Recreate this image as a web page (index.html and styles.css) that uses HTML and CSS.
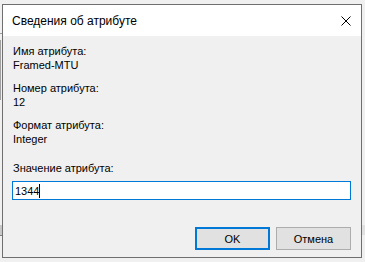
FILE: index.html
```html
<!DOCTYPE html>
<html lang="ru">
<head>
<meta charset="utf-8">
<title>Сведения об атрибуте</title>
<link rel="stylesheet" href="styles.css">
</head>
<body>
<div class="desk">
  <div class="bg-line bg-top"></div>
  <div class="bg-line bg-left"></div>
  <div class="bg-box bg-bl"></div>
  <div class="bg-box bg-br"></div>
  <div class="window">
    <div class="titlebar">
      <span class="title">Сведения об атрибуте</span>
      <svg class="close" width="10" height="10" viewBox="0 0 10 10"><path d="M0.5 0.5L9.5 9.5M9.5 0.5L0.5 9.5" stroke="#000" stroke-width="1" fill="none"/></svg>
    </div>
    <div class="content">
      <div class="group">
        <div class="line">Имя атрибута:</div>
        <div class="line">Framed-MTU</div>
      </div>
      <div class="group">
        <div class="line">Номер атрибута:</div>
        <div class="line">12</div>
      </div>
      <div class="group">
        <div class="line">Формат атрибута:</div>
        <div class="line">Integer</div>
      </div>
      <div class="field">
        <div class="line">Значение атрибута:</div>
        <div class="input"><span class="val">1344</span><span class="caret"></span></div>
      </div>
      <div class="buttons">
        <div class="btn btn-default">OK</div>
        <div class="btn">Отмена</div>
      </div>
    </div>
  </div>
</div>
</body>
</html>
```
FILE: styles.css
```css
html, body {
  margin: 0;
  padding: 0;
}
body {
  width: 365px;
  height: 262px;
  background: #f0f0f0;
  font-family: "Liberation Sans", Arial, sans-serif;
  font-size: 11px;
  color: #000;
  overflow: hidden;
}
.desk {
  position: relative;
  width: 365px;
  height: 262px;
  padding: 4px 0 0 2px;
  box-sizing: border-box;
}
.bg-line, .bg-box {
  position: absolute;
}
.bg-top {
  left: 0;
  top: 33px;
  width: 2px;
  height: 1px;
  background: #a0a0a0;
}
.bg-left {
  left: 0;
  top: 40px;
  width: 1px;
  height: 60px;
  background: #a0a0a0;
}
.bg-bl {
  left: 0;
  top: 225px;
  width: 2px;
  height: 10px;
  background: #c8c8c8;
  border-bottom: 1px solid #808080;
}
.bg-br {
  left: 362px;
  top: 225px;
  width: 3px;
  height: 10px;
  background: #e0e0e0;
}
.window {
  position: relative;
  width: 360px;
  height: 254px;
  box-sizing: border-box;
  border: 1px solid #6f6f6f;
  background: #f0f0f0;
  display: flex;
  flex-direction: column;
}
.titlebar {
  height: 31px;
  background: #fff;
  display: flex;
  align-items: center;
  padding: 0 0 0 9px;
  flex: none;
}
.title {
  font-size: 12px;
  line-height: 16px;
  padding-top: 1px;
  flex: 1;
}
.close {
  margin-right: 10px;
  margin-top: 0;
}
.content {
  flex: 1;
  display: flex;
  flex-direction: column;
  padding: 8px 9px 7px 9px;
}
.group {
  display: flex;
  flex-direction: column;
  margin-bottom: 9px;
  padding-left: 1px;
}
.line {
  line-height: 14px;
  height: 14px;
  white-space: nowrap;
}
.field {
  margin-top: 6px;
  display: flex;
  flex-direction: column;
}
.field .line {
  padding-left: 1px;
}
.input {
  margin-top: 6px;
  width: 339px;
  height: 19px;
  box-sizing: border-box;
  border: 1px solid #0078d7;
  background: #fff;
  display: flex;
  align-items: center;
  padding-left: 2px;
}
.val {
  line-height: 14px;
}
.caret {
  width: 1px;
  height: 14px;
  background: #000;
  margin-left: 0;
}
.buttons {
  margin-top: auto;
  display: flex;
  justify-content: flex-end;
  gap: 6px;
  padding-right: 1px;
}
.btn {
  width: 75px;
  height: 23px;
  box-sizing: border-box;
  border: 1px solid #adadad;
  background: #e1e1e1;
  display: flex;
  align-items: center;
  justify-content: center;
  line-height: 14px;
}
.btn-default {
  border: 2px solid #0078d7;
}
```
